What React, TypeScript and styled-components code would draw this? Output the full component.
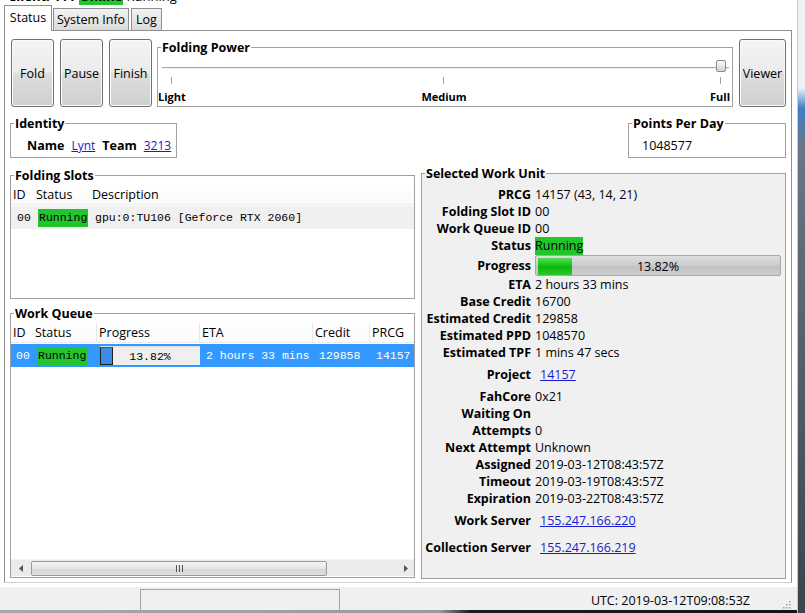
import React from "react";
import styled, { createGlobalStyle } from "styled-components";

const GlobalStyle = createGlobalStyle`
  html, body { margin: 0; padding: 0; background: #fff; }
  body {
    font-family: "Open Sans", "Noto Sans", sans-serif;
    font-size: 12px;
    color: #000;
  }
  * { box-sizing: border-box; }
`;

const GREEN = "#23c52d";
const MONO = `"Liberation Mono", "DejaVu Sans Mono", monospace`;

const Window = styled.div`
  width: 805px;
  height: 613px;
  display: flex;
  overflow: hidden;
  background: #fff;
`;

const Main = styled.div`
  width: 797px;
  display: flex;
  flex-direction: column;
`;

const Edge = styled.div`
  flex: 1;
  border-left: 1px solid #c8c8c8;
  background: linear-gradient(
    to bottom,
    #eef2f6 0,
    #eef2f6 88px,
    #3f7fc4 108px,
    #6a7684 150px,
    #3c434b 100%
  );
`;

const TitleStrip = styled.div`
  height: 6px;
  overflow: hidden;
  padding-left: 8px;
`;

const TitleLine = styled.div`
  margin-top: -12px;
  line-height: 17px;
  font-size: 13px;
  white-space: nowrap;
  display: flex;
  gap: 4px;
`;

const TitleBold = styled.span<{ $bg?: string }>`
  font-weight: 700;
  background: ${(p) => p.$bg || "transparent"};
`;

const TabBar = styled.div`
  height: 25px;
  display: flex;
  align-items: flex-end;
  padding-left: 4px;
  margin-bottom: -1px;
  position: relative;
  z-index: 1;
`;

const Tab = styled.div<{ $active?: boolean; $w: number }>`
  width: ${(p) => p.$w}px;
  height: ${(p) => (p.$active ? "26px" : "23px")};
  margin-right: ${(p) => (p.$active ? "1px" : "2px")};
  display: flex;
  align-items: center;
  justify-content: center;
  font-size: 12.5px;
  white-space: nowrap;
  border: 1px solid #8e8f8f;
  border-bottom: ${(p) => (p.$active ? "none" : "1px solid #8e8f8f")};
  background: ${(p) =>
    p.$active ? "#fff" : "linear-gradient(#f3f3f3, #dadada)"};
  padding-bottom: ${(p) => (p.$active ? "2px" : "0")};
`;

const TabPane = styled.div`
  height: 553px;
  margin: 0 5px 4px 4px;
  border: 1px solid #8e8f8f;
  border-bottom-color: #d0d0d0;
  padding: 8px 5px 3px 5px;
  display: flex;
  flex-direction: column;
`;

const TopRow = styled.div`
  height: 68px;
  display: flex;
  gap: 6px;
  padding-left: 1px;
`;

const CmdButton = styled.div<{ $w: number }>`
  width: ${(p) => p.$w}px;
  height: 68px;
  border: 1px solid #707070;
  border-radius: 3px;
  background: linear-gradient(#f4f4f4 0%, #ebebeb 48%, #dddddd 52%, #cfcfcf 100%);
  box-shadow: inset 0 0 0 1px #fbfbfb;
  display: flex;
  align-items: center;
  justify-content: center;
  font-size: 12.5px;
`;

const GroupBox = styled.fieldset<{ $bg?: string; $h?: number; $w?: number }>`
  margin: 0;
  padding: 0;
  min-width: 0;
  border: 1px solid #a0a0a0;
  background: ${(p) => p.$bg || "#fff"};
  height: ${(p) => (p.$h ? `${p.$h}px` : "auto")};
  width: ${(p) => (p.$w ? `${p.$w}px` : "auto")};
`;

const Legend = styled.legend`
  margin-left: 3px;
  padding: 0 1px;
  font-weight: 700;
  font-size: 12.5px;
  line-height: 17px;
`;

const GroupBody = styled.div<{ $h: number }>`
  height: ${(p) => p.$h}px;
  display: flex;
  flex-direction: column;
`;

const PowerBox = styled(GroupBox)`
  flex: 1;
  margin-left: -1px;
`;

const Track = styled.div`
  position: relative;
  height: 20px;
  margin: 0 3px 0 4px;
  &::before {
    content: "";
    position: absolute;
    left: 0;
    right: 0;
    top: 11px;
    border-top: 1px solid #a6a6a6;
    border-bottom: 1px solid #f2f2f2;
  }
`;

const Thumb = styled.div`
  position: absolute;
  right: 3px;
  top: 4px;
  width: 10px;
  height: 12px;
  border: 1px solid #8a8a8a;
  border-radius: 2px;
  background: linear-gradient(#fafafa, #d4d4d4);
`;

const TickRow = styled.div`
  display: grid;
  grid-template-columns: 1fr 1fr 1fr;
  padding-right: 2px;
`;

const TickMark = styled.div<{ $align: string }>`
  justify-self: ${(p) => p.$align};
  display: flex;
  flex-direction: column;
  align-items: center;
  &::before {
    content: "";
    width: 1px;
    height: 7px;
    margin-top: 1px;
    background: #a0a0a0;
  }
`;

const TickLabel = styled.span`
  margin-top: 6px;
  font-size: 11px;
  font-weight: 700;
  line-height: 13px;
`;

const IdentityRow = styled.div`
  margin-top: 8px;
  display: flex;
  justify-content: space-between;
`;

const IdentityLine = styled.div`
  display: flex;
  gap: 7px;
  padding: 5px 0 0 16px;
  line-height: 17px;
  font-size: 12px;
`;

const Bold = styled.span`
  font-weight: 700;
  font-size: 12.5px;
`;

const Link = styled.span<{ $pad?: number }>`
  color: #1a1ad0;
  text-decoration: underline;
  padding-left: ${(p) => p.$pad || 0}px;
`;

const PpdValue = styled.div`
  padding: 5px 0 0 13px;
  line-height: 17px;
  font-size: 12.5px;
`;

const BottomGrid = styled.div`
  margin-top: 7px;
  display: grid;
  grid-template-columns: 405px 1fr;
  gap: 6px;
  align-items: start;
`;

const LeftColumn = styled.div`
  margin-top: 2px;
  display: flex;
  flex-direction: column;
  gap: 6px;
`;

const ListHeader = styled.div<{ $cols: string }>`
  height: 21px;
  padding-top: 1px;
  display: grid;
  grid-template-columns: ${(p) => p.$cols};
  align-items: center;
  font-size: 12.5px;
  border-bottom: 1px solid #ececec;
  background: linear-gradient(#fff, #fafafa);
  white-space: nowrap;
  overflow: hidden;
`;

const HeadCell = styled.div<{ $sep?: boolean }>`
  padding-left: 2px;
  height: 100%;
  display: flex;
  align-items: center;
  border-right: ${(p) => (p.$sep ? "1px solid #e8e8e8" : "none")};
`;

const ListRow = styled.div<{ $cols: string; $selected?: boolean }>`
  height: 23px;
  margin-top: 1px;
  display: grid;
  grid-template-columns: ${(p) => p.$cols};
  align-items: center;
  font-family: ${MONO};
  font-size: 11.5px;
  white-space: nowrap;
  overflow: hidden;
  background: ${(p) => (p.$selected ? "#3399ff" : "#f0f0f0")};
  color: ${(p) => (p.$selected ? "#fff" : "#000")};
`;

const Cell = styled.div<{ $pad?: number }>`
  padding-left: ${(p) => p.$pad ?? 5}px;
  overflow: hidden;
`;

const RunningTag = styled.span`
  display: inline-block;
  background: ${GREEN};
  color: #000;
  line-height: 18px;
  padding: 0 1px;
`;

const MiniBar = styled.div`
  width: 100px;
  height: 19px;
  display: grid;
  background: #efefef;
  border-top: 1px solid #e0e0e0;
  color: #000;
`;

const MiniFill = styled.div`
  grid-area: 1 / 1;
  width: 13px;
  background: #3a8ee6;
  border: 1px solid #1e1e1e;
  border-top-color: #555;
`;

const MiniText = styled.div`
  grid-area: 1 / 1;
  display: flex;
  align-items: center;
  justify-content: center;
`;

const ListFill = styled.div`
  flex: 1;
`;

const HScroll = styled.div`
  height: 17px;
  display: flex;
  align-items: center;
  background: #ebebeb;
  border-top: 1px solid #f4f4f4;
`;

const ScrollArrow = styled.div<{ $w: number }>`
  width: ${(p) => p.$w}px;
  height: 100%;
  display: flex;
  align-items: center;
  justify-content: center;
`;

const ScrollThumb = styled.div`
  width: 296px;
  height: 15px;
  margin-left: 1px;
  border: 1px solid #9a9a9a;
  border-radius: 2px;
  background: linear-gradient(#f6f6f6, #e4e4e4 50%, #d6d6d6 51%, #dedede);
  display: flex;
  align-items: center;
  justify-content: center;
`;

const ScrollTrack = styled.div`
  flex: 1;
`;

const WUGrid = styled.div`
  padding-top: 4px;
  display: grid;
  grid-template-columns: 109px 1fr;
  column-gap: 4px;
  font-size: 12.5px;
`;

const WULabel = styled.div<{ $h: number }>`
  height: ${(p) => p.$h}px;
  display: flex;
  align-items: center;
  justify-content: flex-end;
  font-weight: 700;
  white-space: nowrap;
`;

const WUValue = styled.div<{ $h: number }>`
  height: ${(p) => p.$h}px;
  display: flex;
  align-items: center;
  white-space: nowrap;
  padding-right: 4px;
`;

const StatusTag = styled.span`
  background: ${GREEN};
  line-height: 18px;
`;

const BigBar = styled.div`
  width: 100%;
  height: 21px;
  display: grid;
  padding: 2px;
  border: 1px solid #a8a8a8;
  border-radius: 2px;
  background: linear-gradient(#dedede, #cbcbcb 50%, #c2c2c2 51%, #cdcdcd);
`;

const BigFill = styled.div`
  grid-area: 1 / 1;
  width: 14%;
  background: linear-gradient(#4fe04f, #12c012 45%, #0fb40f 55%, #2bc82b);
`;

const BigText = styled.div`
  grid-area: 1 / 1;
  display: flex;
  align-items: center;
  justify-content: center;
`;

const StatusBar = styled.div`
  flex: 1;
  display: flex;
  flex-direction: column;
  background: #f0f0f0;
`;

const StatusInner = styled.div`
  flex: 1;
  display: flex;
  padding-left: 140px;
  padding-top: 2px;
`;

const StatusPanel = styled.div`
  width: 200px;
  border: 1px solid #a5a5a5;
  border-bottom: none;
`;

const Clock = styled.div`
  margin-left: auto;
  align-self: center;
  font-size: 12.5px;
  padding-top: 1px;
`;

const Grip = styled.div`
  width: 47px;
  display: flex;
  justify-content: flex-end;
  align-items: flex-end;
  padding: 0 6px 1px 0;
`;

const BottomShadow = styled.div`
  height: 3px;
  background: linear-gradient(to right, #a8a8a8 0, #9a9a9a 440px, #1c1c1c 470px, #141414 100%);
`;

type WURow = { label: string; value: string; kind?: "status" | "progress" | "link" };

const wuRows: WURow[] = [
  { label: "PRCG", value: "14157 (43, 14, 21)" },
  { label: "Folding Slot ID", value: "00" },
  { label: "Work Queue ID", value: "00" },
  { label: "Status", value: "Running", kind: "status" },
  { label: "Progress", value: "13.82%", kind: "progress" },
  { label: "ETA", value: "2 hours 33 mins" },
  { label: "Base Credit", value: "16700" },
  { label: "Estimated Credit", value: "129858" },
  { label: "Estimated PPD", value: "1048570" },
  { label: "Estimated TPF", value: "1 mins 47 secs" },
  { label: "Project", value: "14157", kind: "link" },
  { label: "FahCore", value: "0x21" },
  { label: "Waiting On", value: "" },
  { label: "Attempts", value: "0" },
  { label: "Next Attempt", value: "Unknown" },
  { label: "Assigned", value: "2019-03-12T08:43:57Z" },
  { label: "Timeout", value: "2019-03-19T08:43:57Z" },
  { label: "Expiration", value: "2019-03-22T08:43:57Z" },
  { label: "Work Server", value: "155.247.166.220", kind: "link" },
  { label: "Collection Server", value: "155.247.166.219", kind: "link" },
];

const rowHeight = (r: WURow) => (r.kind === "progress" ? 22 : r.kind === "link" ? 27 : 17);

const slotCols = "23px 56px 1fr";
const queueCols = "22px 64px 103px 113px 57px 1fr";

const Arrow = ({ dir }: { dir: "left" | "right" }) => (
  <svg width="4" height="7" viewBox="0 0 4 7">
    <path d={dir === "left" ? "M4 0 L0 3.5 L4 7 Z" : "M0 0 L4 3.5 L0 7 Z"} fill="#555" />
  </svg>
);

const GripLines = () => (
  <svg width="9" height="7" viewBox="0 0 9 7">
    <rect x="1" y="0" width="1" height="7" fill="#555" />
    <rect x="4" y="0" width="1" height="7" fill="#555" />
    <rect x="7" y="0" width="1" height="7" fill="#555" />
  </svg>
);

const ResizeGrip = () => (
  <svg width="10" height="10" viewBox="0 0 10 10">
    {[
      [8, 2],
      [5, 5],
      [8, 5],
      [2, 8],
      [5, 8],
      [8, 8],
    ].map(([x, y]) => (
      <rect key={`${x}-${y}`} x={x} y={y} width="1.5" height="1.5" fill="#a0a0a0" />
    ))}
  </svg>
);

const WUValueContent = ({ row }: { row: WURow }) => {
  if (row.kind === "status") return <StatusTag>{row.value}</StatusTag>;
  if (row.kind === "link") return <Link $pad={5}>{row.value}</Link>;
  if (row.kind === "progress")
    return (
      <BigBar>
        <BigFill />
        <BigText>{row.value}</BigText>
      </BigBar>
    );
  return <>{row.value}</>;
};

export default function App() {
  return (
    <>
      <GlobalStyle />
      <Window>
        <Main>
          <TitleStrip>
            <TitleLine>
              <TitleBold>Client: 111</TitleBold>
              <TitleBold $bg={GREEN}>Online</TitleBold>
              <span>Running</span>
            </TitleLine>
          </TitleStrip>

          <TabBar>
            <Tab $active $w={48}>Status</Tab>
            <Tab $w={76}>System Info</Tab>
            <Tab $w={31}>Log</Tab>
          </TabBar>

          <TabPane>
            <TopRow>
              <CmdButton $w={43}>Fold</CmdButton>
              <CmdButton $w={43}>Pause</CmdButton>
              <CmdButton $w={43}>Finish</CmdButton>
              <PowerBox>
                <Legend>Folding Power</Legend>
                <Track>
                  <Thumb />
                </Track>
                <TickRow>
                  <TickMark $align="start">
                    <TickLabel>Light</TickLabel>
                  </TickMark>
                  <TickMark $align="center">
                    <TickLabel>Medium</TickLabel>
                  </TickMark>
                  <TickMark $align="end">
                    <TickLabel>Full</TickLabel>
                  </TickMark>
                </TickRow>
              </PowerBox>
              <CmdButton $w={47}>Viewer</CmdButton>
            </TopRow>

            <IdentityRow>
              <GroupBox $w={167} $h={43}>
                <Legend>Identity</Legend>
                <IdentityLine>
                  <Bold>Name</Bold>
                  <Link>Lynt</Link>
                  <Bold>Team</Bold>
                  <Link>3213</Link>
                </IdentityLine>
              </GroupBox>
              <GroupBox $w={158} $h={43}>
                <Legend>Points Per Day</Legend>
                <PpdValue>1048577</PpdValue>
              </GroupBox>
            </IdentityRow>

            <BottomGrid>
              <LeftColumn>
                <GroupBox $h={132}>
                  <Legend>Folding Slots</Legend>
                  <ListHeader $cols={slotCols}>
                    <HeadCell>ID</HeadCell>
                    <HeadCell>Status</HeadCell>
                    <HeadCell>Description</HeadCell>
                  </ListHeader>
                  <ListRow $cols={slotCols}>
                    <Cell $pad={6}>00</Cell>
                    <Cell $pad={4}>
                      <RunningTag>Running</RunningTag>
                    </Cell>
                    <Cell $pad={5}>gpu:0:TU106 [Geforce RTX 2060]</Cell>
                  </ListRow>
                </GroupBox>

                <GroupBox $h={273}>
                  <Legend>Work Queue</Legend>
                  <GroupBody $h={254}>
                    <ListHeader $cols={queueCols}>
                      <HeadCell>ID</HeadCell>
                      <HeadCell $sep>Status</HeadCell>
                      <HeadCell $sep>Progress</HeadCell>
                      <HeadCell $sep>ETA</HeadCell>
                      <HeadCell $sep>Credit</HeadCell>
                      <HeadCell>PRCG</HeadCell>
                    </ListHeader>
                    <ListRow $cols={queueCols} $selected>
                      <Cell $pad={5}>00</Cell>
                      <Cell $pad={4}>
                        <RunningTag>Running</RunningTag>
                      </Cell>
                      <Cell $pad={3}>
                        <MiniBar>
                          <MiniFill />
                          <MiniText>13.82%</MiniText>
                        </MiniBar>
                      </Cell>
                      <Cell $pad={6}>2 hours 33 mins</Cell>
                      <Cell $pad={6}>129858</Cell>
                      <Cell $pad={6}>14157</Cell>
                    </ListRow>
                    <ListFill />
                    <HScroll>
                      <ScrollArrow $w={19}>
                        <Arrow dir="left" />
                      </ScrollArrow>
                      <ScrollThumb>
                        <GripLines />
                      </ScrollThumb>
                      <ScrollTrack />
                      <ScrollArrow $w={17}>
                        <Arrow dir="right" />
                      </ScrollArrow>
                    </HScroll>
                  </GroupBody>
                </GroupBox>
              </LeftColumn>

              <GroupBox $bg="#f0f0f0" $h={414}>
                <Legend>Selected Work Unit</Legend>
                <WUGrid>
                  {wuRows.map((r) => (
                    <React.Fragment key={r.label}>
                      <WULabel $h={rowHeight(r)}>{r.label}</WULabel>
                      <WUValue $h={rowHeight(r)}>
                        <WUValueContent row={r} />
                      </WUValue>
                    </React.Fragment>
                  ))}
                </WUGrid>
              </GroupBox>
            </BottomGrid>
          </TabPane>

          <StatusBar>
            <StatusInner>
              <StatusPanel />
              <Clock>UTC: 2019-03-12T09:08:53Z</Clock>
              <Grip>
                <ResizeGrip />
              </Grip>
            </StatusInner>
            <BottomShadow />
          </StatusBar>
        </Main>
        <Edge />
      </Window>
    </>
  );
}
